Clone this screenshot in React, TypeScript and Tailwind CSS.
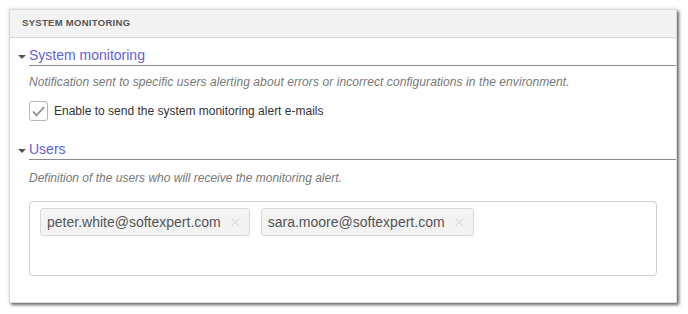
import React from "react";

const Section = ({ title, children }: { title: string; children: React.ReactNode }) => {
  return (
    <div>
      <div className="flex items-end h-[20px]">
        <div className="w-[20px] flex justify-end pr-[4px] pb-[7px]">
          <div className="w-0 h-0 border-l-[4px] border-r-[4px] border-t-[4px] border-l-transparent border-r-transparent border-t-[#555]" />
        </div>
        <div className="flex-1 border-b border-[#8a8a8a] text-[14px] leading-[18px] text-[#6361cf] pb-[1px] -ml-[1px]">{title}</div>
      </div>
      <div className="pl-[19px]">{children}</div>
    </div>
  );
};

const Tag = ({ email }: { email: string }) => {
  return (
    <div className="flex items-center h-[28px] pl-[6px] pr-[9px] bg-[#f3f3f3] border border-[#d9d9d9] rounded-[3px] text-[14px] text-[#555]">
      <span>{email}</span>
      <svg className="ml-[10px]" width="9" height="9" viewBox="0 0 9 9">
        <path d="M0.5 0.5 L8.5 8.5 M8.5 0.5 L0.5 8.5" stroke="#cfcfcf" strokeWidth="1" />
      </svg>
    </div>
  );
};

export default function App() {
  return (
    <div className="w-[688px] h-[314px] bg-white pt-[9px] pl-[9px] font-['Liberation_Sans',Arial,sans-serif]">
      <div className="w-[668px] h-[294px] bg-white border border-[#dcdcdc] shadow-[2px_2px_3px_rgba(0,0,0,0.6),-1px_-1px_4px_rgba(0,0,0,0.08)]">
        <div className="h-[28px] bg-[#f3f3f3] border-b border-[#dadada] flex items-center pl-[12px] text-[9.5px] font-bold text-[#555] tracking-[0.3px]">
          SYSTEM MONITORING
        </div>
        <div className="pt-[8px]">
          <Section title="System monitoring">
            <p className="mt-[7px] text-[12px] italic text-[#777] tracking-[0.08px]">
              Notification sent to specific users alerting about errors or incorrect configurations in the environment.
            </p>
            <label className="mt-[10px] flex items-center gap-[6px] text-[12px] text-[#333]">
              <span className="w-[19px] h-[20px] border border-[#b5b5b5] rounded-[3px] bg-white flex items-center justify-center">
                <svg width="13" height="11" viewBox="0 0 13 11">
                  <path d="M1 5.5 L4.5 9.5 L12 1" fill="none" stroke="#8a8a8a" strokeWidth="1.8" />
                </svg>
              </span>
              Enable to send the system monitoring alert e-mails
            </label>
          </Section>
          <div className="mt-[19px]">
            <Section title="Users">
              <p className="mt-[9px] text-[12px] italic text-[#777]">
                Definition of the users who will receive the monitoring alert.
              </p>
              <div className="mt-[14px] mr-[19px] h-[75px] border border-[#cfcfcf] rounded-[4px] flex items-start gap-[11px] pt-[6px] pl-[10px]">
                <Tag email="peter.white@softexpert.com" />
                <Tag email="sara.moore@softexpert.com" />
              </div>
            </Section>
          </div>
        </div>
      </div>
    </div>
  );
}
